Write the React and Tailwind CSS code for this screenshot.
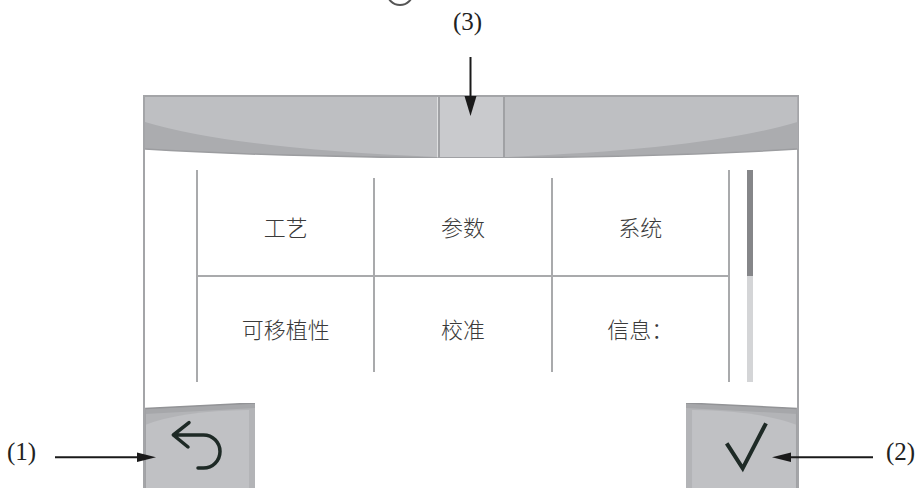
const cjk = { fontFamily: '"Noto Sans CJK SC", "Noto Sans", sans-serif' };
const serif = { fontFamily: '"Liberation Serif", serif' };

const HeaderSide = ({ flip }) => (
  <svg viewBox="0 0 292 61" preserveAspectRatio="none" className="block h-full flex-1" style={flip ? { transform: 'scaleX(-1)' } : undefined}>
    <path d="M0 0 H292 V61 C200 60 80 57 0 52 Z" fill="#bebfc2" />
    <path d="M0 25 Q90 52 292 60 V61 C200 60 80 57 0 52 Z" fill="#abacaf" />
    <path d="M0 52 C80 57 200 60 292 61" fill="none" stroke="#9c9da0" strokeWidth="1.5" />
  </svg>
);

// key face, mirrored for the right-hand key
const KeyFace = ({ flip }) => (
  <svg viewBox="0 0 110 85" preserveAspectRatio="none" className="block w-full h-full" style={flip ? { transform: 'scaleX(-1)' } : undefined}>
    <path d="M0 5.5 L110 0 V85 H0 Z" fill="#b3b4b7" />
    <path d="M0 5.5 L110 0 V5 L0 11 Z" fill="#a6a7aa" />
    <path d="M0 5.5 L110 0" stroke="#929396" strokeWidth="1.5" />
    <path d="M0 22 Q35 8 104 7 L104 85 H0 Z" fill="#c0c1c4" />
    <path d="M0 5.5 V85" stroke="#a1a2a5" strokeWidth="2" />
  </svg>
);

const Cell = ({ label, first, row2 }) => (
  <div
    className={`flex-1 flex items-center justify-center text-[22px] font-light text-[#3a3a3a] ${first ? '' : 'border-l-2 border-[#a9aaac]'} ${row2 ? 'h-[95px] pt-[8px]' : ''}`}
    style={cjk}
  >
    {label}
  </div>
);

export default function App() {
  return (
    <div className="relative w-[919px] h-[488px] bg-white overflow-hidden">
      <div className="ml-[143px] pt-[95px] w-[656px] h-[488px]">
        <div className="flex flex-col h-full border-x-2 border-t-2 border-[#a4a5a8]">
          {/* header */}
          <div className="flex h-[61px] shrink-0">
            <HeaderSide />
            <div className="w-[67px] h-[61px] bg-[#c9cacd] border-x-2 border-b border-[#a0a1a4]" />
            <HeaderSide flip />
          </div>

          {/* body */}
          <div className="flex-1 flex flex-col">
            <div className="flex mt-[12px] ml-[51px] h-[212px]">
              <div className="w-[534px] h-full border-x-2 border-[#a9aaac] flex flex-col">
                <div className="h-[107px] pt-[8px] border-b-2 border-[#a9aaac] flex">
                  <Cell label="工艺" first />
                  <Cell label="参数" />
                  <Cell label="系统" />
                </div>
                <div className="flex-1 flex items-start">
                  <Cell label="可移植性" first row2 />
                  <Cell label="校准" row2 />
                  <Cell label="信息：" row2 />
                </div>
              </div>
              <div className="ml-[17px] w-[6px] h-full flex flex-col">
                <div className="h-[106px] bg-[#858689]" />
                <div className="flex-1 bg-[#d4d5d7]" />
              </div>
            </div>
            <div className="flex-1" />
            <div className="h-[85px] flex justify-between">
              <div className="relative w-[110px] h-full">
                <KeyFace />
                <svg viewBox="0 0 110 85" className="absolute inset-0 w-full h-full">
                  <path d="M44 19.7 L28.3 32 L43 44 M28.3 32 H58.5 A16.5 16.5 0 0 1 58.5 65 H53" fill="none" stroke="#1e2a26" strokeWidth="3.5" strokeLinecap="round" strokeLinejoin="round" />
                </svg>
              </div>
              <div className="relative w-[111px] h-full">
                <KeyFace flip />
                <svg viewBox="0 0 111 85" className="absolute inset-0 w-full h-full">
                  <path d="M40.7 40.3 L56.7 65.3 L80 20.3" fill="none" stroke="#1e2a26" strokeWidth="4" strokeLinejoin="miter" />
                </svg>
              </div>
            </div>
          </div>
        </div>
      </div>

      {/* callouts */}
      <svg width="919" height="488" className="absolute inset-0 pointer-events-none">
        <circle cx="400" cy="-8" r="13" fill="none" stroke="#555" strokeWidth="2" />
        <path d="M470.5 57 V100" stroke="#1a1a1a" strokeWidth="2" />
        <path d="M464.5 96 L476.5 96 L470.5 116 Z" fill="#1a1a1a" />
        <path d="M55 457.3 H140" stroke="#1a1a1a" strokeWidth="2" />
        <path d="M137 452.5 L137 462 L156 457.3 Z" fill="#1a1a1a" />
        <path d="M873 457.3 H788" stroke="#1a1a1a" strokeWidth="2" />
        <path d="M791 452.5 L791 462 L772 457.3 Z" fill="#1a1a1a" />
      </svg>
      <span className="absolute left-[453px] top-[9px] text-[25px] leading-[26px] text-[#222]" style={serif}>(3)</span>
      <span className="absolute left-[7px] top-[439px] text-[25px] leading-[26px] text-[#222]" style={serif}>(1)</span>
      <span className="absolute left-[886px] top-[439px] text-[25px] leading-[26px] text-[#222]" style={serif}>(2)</span>
    </div>
  );
}
